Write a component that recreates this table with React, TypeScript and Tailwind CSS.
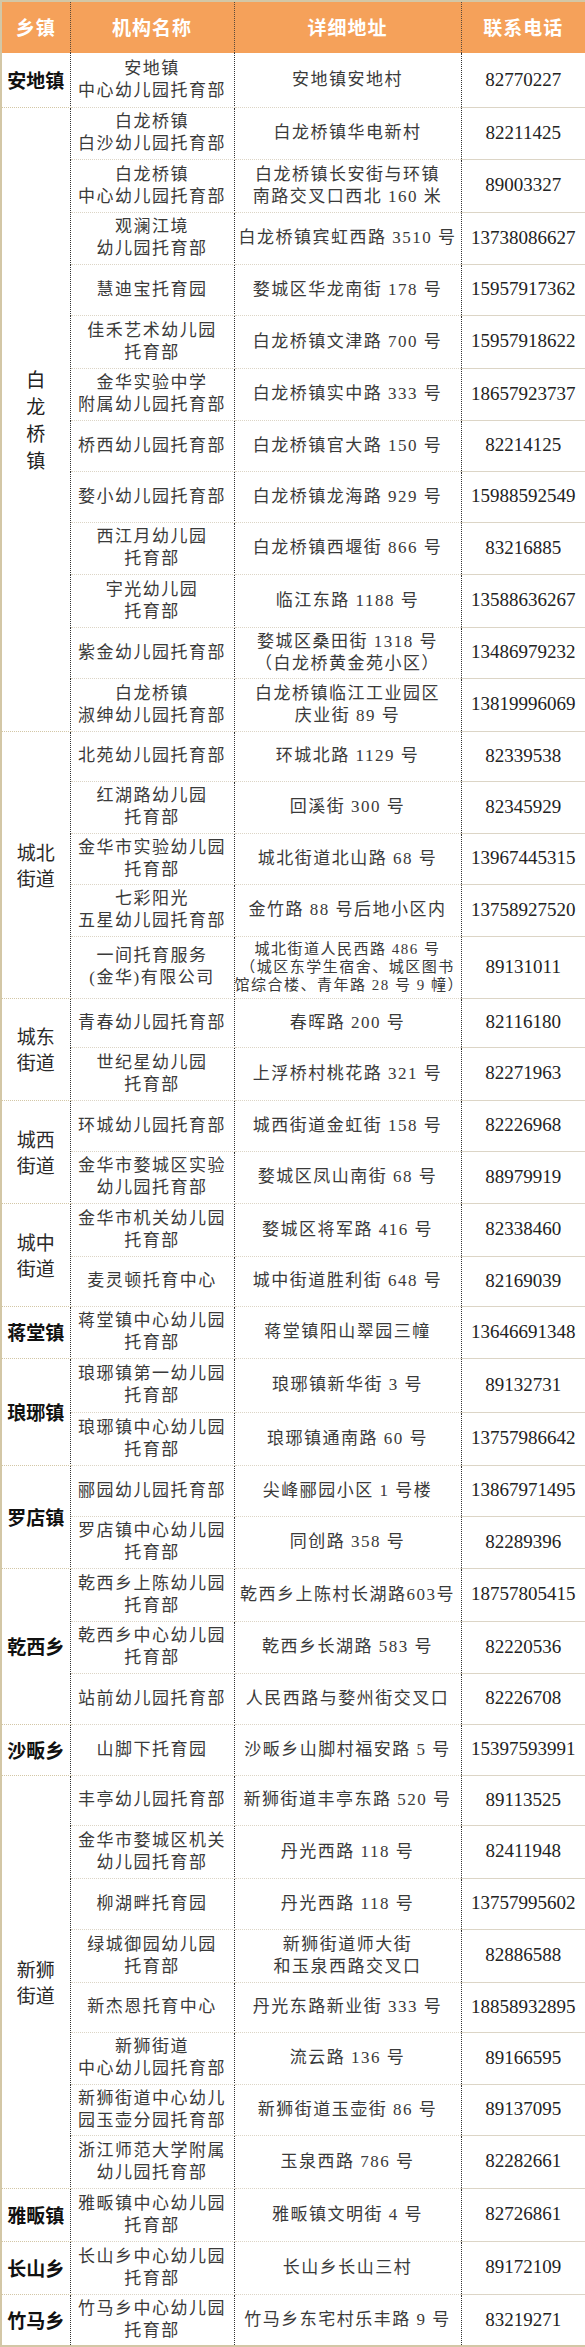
import React from "react";

type Row = { name: string[]; addr: string[]; tel: string; h: string; small?: boolean };
type Group = { town: string[]; kind: "one" | "two" | "vert"; rows: Row[] };

const groups: Group[] = [
  {
    town: ["安地镇"],
    kind: "one",
    rows: [{ name: ["安地镇", "中心幼儿园托育部"], addr: ["安地镇安地村"], tel: "82770227", h: "h-[54px]" }],
  },
  {
    town: ["白", "龙", "桥", "镇"],
    kind: "vert",
    rows: [
      { name: ["白龙桥镇", "白沙幼儿园托育部"], addr: ["白龙桥镇华电新村"], tel: "82211425", h: "h-[52px]" },
      { name: ["白龙桥镇", "中心幼儿园托育部"], addr: ["白龙桥镇长安街与环镇", "南路交叉口西北 160 米"], tel: "89003327", h: "h-[53px]" },
      { name: ["观澜江境", "幼儿园托育部"], addr: ["白龙桥镇宾虹西路 3510 号"], tel: "13738086627", h: "h-[52px]" },
      { name: ["慧迪宝托育园"], addr: ["婺城区华龙南街 178 号"], tel: "15957917362", h: "h-[51px]" },
      { name: ["佳禾艺术幼儿园", "托育部"], addr: ["白龙桥镇文津路 700 号"], tel: "15957918622", h: "h-[53px]" },
      { name: ["金华实验中学", "附属幼儿园托育部"], addr: ["白龙桥镇实中路 333 号"], tel: "18657923737", h: "h-[52px]" },
      { name: ["桥西幼儿园托育部"], addr: ["白龙桥镇官大路 150 号"], tel: "82214125", h: "h-[51px]" },
      { name: ["婺小幼儿园托育部"], addr: ["白龙桥镇龙海路 929 号"], tel: "15988592549", h: "h-[51px]" },
      { name: ["西江月幼儿园", "托育部"], addr: ["白龙桥镇西堰街 866 号"], tel: "83216885", h: "h-[52px]" },
      { name: ["宇光幼儿园", "托育部"], addr: ["临江东路 1188 号"], tel: "13588636267", h: "h-[53px]" },
      { name: ["紫金幼儿园托育部"], addr: ["婺城区桑田街 1318 号", "（白龙桥黄金苑小区）"], tel: "13486979232", h: "h-[51px]" },
      { name: ["白龙桥镇", "淑绅幼儿园托育部"], addr: ["白龙桥镇临江工业园区", "庆业街 89 号"], tel: "13819996069", h: "h-[53px]" },
    ],
  },
  {
    town: ["城北", "街道"],
    kind: "two",
    rows: [
      { name: ["北苑幼儿园托育部"], addr: ["环城北路 1129 号"], tel: "82339538", h: "h-[50px]" },
      { name: ["红湖路幼儿园", "托育部"], addr: ["回溪街 300 号"], tel: "82345929", h: "h-[52px]" },
      { name: ["金华市实验幼儿园", "托育部"], addr: ["城北街道北山路 68 号"], tel: "13967445315", h: "h-[51px]" },
      { name: ["七彩阳光", "五星幼儿园托育部"], addr: ["金竹路 88 号后地小区内"], tel: "13758927520", h: "h-[52px]" },
      {
        name: ["一间托育服务", "(金华)有限公司"],
        addr: ["城北街道人民西路 486 号", "（城区东学生宿舍、城区图书", "馆综合楼、青年路 28 号 9 幢）"],
        tel: "89131011",
        h: "h-[62px]",
        small: true,
      },
    ],
  },
  {
    town: ["城东", "街道"],
    kind: "two",
    rows: [
      { name: ["青春幼儿园托育部"], addr: ["春晖路 200 号"], tel: "82116180", h: "h-[49px]" },
      { name: ["世纪星幼儿园", "托育部"], addr: ["上浮桥村桃花路 321 号"], tel: "82271963", h: "h-[53px]" },
    ],
  },
  {
    town: ["城西", "街道"],
    kind: "two",
    rows: [
      { name: ["环城幼儿园托育部"], addr: ["城西街道金虹街 158 号"], tel: "82226968", h: "h-[51px]" },
      { name: ["金华市婺城区实验", "幼儿园托育部"], addr: ["婺城区凤山南街 68 号"], tel: "88979919", h: "h-[52px]" },
    ],
  },
  {
    town: ["城中", "街道"],
    kind: "two",
    rows: [
      { name: ["金华市机关幼儿园", "托育部"], addr: ["婺城区将军路 416 号"], tel: "82338460", h: "h-[53px]" },
      { name: ["麦灵顿托育中心"], addr: ["城中街道胜利街 648 号"], tel: "82169039", h: "h-[50px]" },
    ],
  },
  {
    town: ["蒋堂镇"],
    kind: "one",
    rows: [{ name: ["蒋堂镇中心幼儿园", "托育部"], addr: ["蒋堂镇阳山翠园三幢"], tel: "13646691348", h: "h-[52px]" }],
  },
  {
    town: ["琅琊镇"],
    kind: "one",
    rows: [
      { name: ["琅琊镇第一幼儿园", "托育部"], addr: ["琅琊镇新华街 3 号"], tel: "89132731", h: "h-[54px]" },
      { name: ["琅琊镇中心幼儿园", "托育部"], addr: ["琅琊镇通南路 60 号"], tel: "13757986642", h: "h-[53px]" },
    ],
  },
  {
    town: ["罗店镇"],
    kind: "one",
    rows: [
      { name: ["郦园幼儿园托育部"], addr: ["尖峰郦园小区 1 号楼"], tel: "13867971495", h: "h-[51px]" },
      { name: ["罗店镇中心幼儿园", "托育部"], addr: ["同创路 358 号"], tel: "82289396", h: "h-[52px]" },
    ],
  },
  {
    town: ["乾西乡"],
    kind: "one",
    rows: [
      { name: ["乾西乡上陈幼儿园", "托育部"], addr: ["乾西乡上陈村长湖路603号"], tel: "18757805415", h: "h-[53px]" },
      { name: ["乾西乡中心幼儿园", "托育部"], addr: ["乾西乡长湖路 583 号"], tel: "82220536", h: "h-[52px]" },
      { name: ["站前幼儿园托育部"], addr: ["人民西路与婺州街交叉口"], tel: "82226708", h: "h-[51px]" },
    ],
  },
  {
    town: ["沙畈乡"],
    kind: "one",
    rows: [{ name: ["山脚下托育园"], addr: ["沙畈乡山脚村福安路 5 号"], tel: "15397593991", h: "h-[51px]" }],
  },
  {
    town: ["新狮", "街道"],
    kind: "two",
    rows: [
      { name: ["丰亭幼儿园托育部"], addr: ["新狮街道丰亭东路 520 号"], tel: "89113525", h: "h-[50px]" },
      { name: ["金华市婺城区机关", "幼儿园托育部"], addr: ["丹光西路 118 号"], tel: "82411948", h: "h-[53px]" },
      { name: ["柳湖畔托育园"], addr: ["丹光西路 118 号"], tel: "13757995602", h: "h-[51px]" },
      { name: ["绿城御园幼儿园", "托育部"], addr: ["新狮街道师大街", "和玉泉西路交叉口"], tel: "82886588", h: "h-[53px]" },
      { name: ["新杰恩托育中心"], addr: ["丹光东路新业街 333 号"], tel: "18858932895", h: "h-[50px]" },
      { name: ["新狮街道", "中心幼儿园托育部"], addr: ["流云路 136 号"], tel: "89166595", h: "h-[52px]" },
      { name: ["新狮街道中心幼儿", "园玉壶分园托育部"], addr: ["新狮街道玉壶街 86 号"], tel: "89137095", h: "h-[51px]" },
      { name: ["浙江师范大学附属", "幼儿园托育部"], addr: ["玉泉西路 786 号"], tel: "82282661", h: "h-[53px]" },
    ],
  },
  {
    town: ["雅畈镇"],
    kind: "one",
    rows: [{ name: ["雅畈镇中心幼儿园", "托育部"], addr: ["雅畈镇文明街 4 号"], tel: "82726861", h: "h-[53px]" }],
  },
  {
    town: ["长山乡"],
    kind: "one",
    rows: [{ name: ["长山乡中心幼儿园", "托育部"], addr: ["长山乡长山三村"], tel: "89172109", h: "h-[53px]" }],
  },
  {
    town: ["竹马乡"],
    kind: "one",
    rows: [{ name: ["竹马乡中心幼儿园", "托育部"], addr: ["竹马乡东宅村乐丰路 9 号"], tel: "83219271", h: "h-[52px]" }],
  },
];

const townClass = {
  one: "text-[19px] font-bold leading-[24px] text-[#111]",
  two: "text-[19px] font-normal leading-[26px] text-[#2a2a2a]",
  vert: "text-[19px] font-normal leading-[27px] text-[#222]",
};

const Lines = ({ lines }: { lines: string[] }) => (
  <>
    {lines.map((l, i) => (
      <div key={i}>{l}</div>
    ))}
  </>
);

export default function App() {
  return (
    <div className="w-[585px] bg-white font-['Liberation_Serif','Noto_Sans_CJK_SC',serif]">
      <table className="w-[585px] table-fixed border-collapse border-2 border-[#d3c7a6]">
        <colgroup>
          <col className="w-[69px]" />
          <col className="w-[164px]" />
          <col className="w-[227px]" />
          <col className="w-[125px]" />
        </colgroup>
        <thead>
          <tr className="h-[52px] bg-[#f5a15a] text-[19px] font-bold tracking-[1px] text-white font-['Noto_Sans_CJK_SC',sans-serif]">
            <th className="border-r border-dotted border-[#5a4a3a] text-center">乡镇</th>
            <th className="border-r border-dotted border-[#5a4a3a] text-center">机构名称</th>
            <th className="border-r border-dotted border-[#5a4a3a] text-center">详细地址</th>
            <th className="text-center">联系电话</th>
          </tr>
        </thead>
        <tbody>
          {groups.map((g) =>
            g.rows.map((r, i) => (
              <tr key={g.town.join("") + i} className={r.h}>
                {i === 0 && (
                  <td
                    rowSpan={g.rows.length}
                    className={
                      "border-r border-dotted border-r-[#333] border-b border-b-[#d3c7a6] border-b-solid text-center align-middle font-['Noto_Sans_CJK_SC',sans-serif] " +
                      townClass[g.kind]
                    }
                  >
                    <Lines lines={g.town} />
                  </td>
                )}
                <td className="border-r border-dotted border-r-[#333] border-b border-b-solid border-b-[#dcd5c6] text-center align-middle text-[17px] leading-[22px] tracking-[1.5px] text-[#3a3a3a]">
                  <Lines lines={r.name} />
                </td>
                <td
                  className={
                    "border-r border-dotted border-r-[#333] border-b border-b-solid border-b-[#dcd5c6] text-center align-middle tracking-[1.5px] text-[#3a3a3a] " +
                    (r.small ? "text-[15px] leading-[18px]" : "text-[17px] leading-[22px]")
                  }
                >
                  <Lines lines={r.addr} />
                </td>
                <td className="border-b border-b-solid border-b-[#dcd5c6] text-center align-middle text-[19px] text-[#222]">
                  {r.tel}
                </td>
              </tr>
            ))
          )}
        </tbody>
      </table>
    </div>
  );
}
